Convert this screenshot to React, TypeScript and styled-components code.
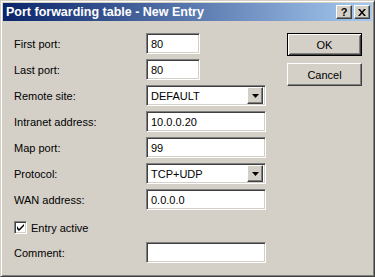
import React from "react";
import styled, { createGlobalStyle, css } from "styled-components";

const Global = createGlobalStyle`
  html, body { margin: 0; padding: 0; background: #d4d0c8; }
  * { box-sizing: border-box; }
`;

const font = `"Liberation Sans", Arial, sans-serif`;

const Window = styled.div`
  width: 375px;
  height: 277px;
  background: #d4d0c8;
  border: 1px solid;
  border-color: #d4d0c8 #404040 #404040 #d4d0c8;
  box-shadow: inset 1px 1px #ffffff, inset -1px -1px #808080;
  padding: 2px;
  display: flex;
  flex-direction: column;
  font-family: ${font};
  font-size: 11px;
  color: #000;
`;

const TitleBar = styled.div`
  height: 18px;
  background: linear-gradient(to right, #0a246a, #a6caf0);
  display: flex;
  align-items: center;
  padding: 0 2px 0 3px;
`;

const TitleText = styled.div`
  flex: 1;
  color: #fff;
  font-weight: bold;
  font-size: 12.5px;
`;

const raised = css`
  border: 1px solid;
  border-color: #ffffff #404040 #404040 #ffffff;
  box-shadow: inset -1px -1px #808080, inset 1px 1px #d4d0c8;
  background: #d4d0c8;
`;

const TitleButton = styled.div<{ $gap?: number }>`
  ${raised};
  width: 16px;
  height: 14px;
  margin-left: ${(p) => p.$gap ?? 0}px;
  display: flex;
  align-items: center;
  justify-content: center;
  font-weight: bold;
  font-size: 11px;
  line-height: 1;
  color: #000;
`;

const Body = styled.div`
  flex: 1;
  display: flex;
  padding: 12px 10px 0 11px;
`;

const Form = styled.div`
  display: flex;
  flex-direction: column;
  gap: 5px;
`;

const Row = styled.div<{ $top?: number }>`
  display: flex;
  align-items: center;
  margin-top: ${(p) => p.$top ?? 0}px;
`;

const Label = styled.div`
  width: 132px;
  white-space: nowrap;
`;

const sunken = css`
  border: 1px solid;
  border-color: #808080 #ffffff #ffffff #808080;
  box-shadow: inset 1px 1px #404040, inset -1px -1px #d4d0c8;
  background: #fff;
`;

const Field = styled.div<{ $w: number }>`
  ${sunken};
  width: ${(p) => p.$w}px;
  height: 21px;
  padding: 0 4px;
  display: flex;
  align-items: center;
  white-space: nowrap;
`;

const Select = styled(Field)`
  padding: 2px 2px 2px 4px;
  justify-content: space-between;
`;

const DropButton = styled.div`
  ${raised};
  width: 16px;
  height: 17px;
  display: flex;
  align-items: center;
  justify-content: center;
`;

const CheckRow = styled.div`
  display: flex;
  align-items: center;
  gap: 4px;
  margin-top: 6px;
  height: 13px;
`;

const CheckBox = styled.div`
  ${sunken};
  width: 13px;
  height: 13px;
  display: flex;
  align-items: center;
  justify-content: center;
`;

const Buttons = styled.div`
  margin-left: auto;
  display: flex;
  flex-direction: column;
  gap: 7px;
`;

const Button = styled.div<{ $default?: boolean }>`
  width: 75px;
  height: 23px;
  display: flex;
  align-items: center;
  justify-content: center;
  background: #d4d0c8;
  ${(p) =>
    p.$default
      ? css`
          border: 1px solid #000;
          box-shadow: inset 1px 1px #ffffff, inset -1px -1px #404040,
            inset 2px 2px #d4d0c8, inset -2px -2px #808080;
        `
      : raised};
`;

const Arrow = () => (
  <svg width="7" height="4" viewBox="0 0 7 4">
    <path d="M0 0h7L3.5 4z" fill="#000" />
  </svg>
);

const CloseGlyph = () => (
  <svg width="8" height="7" viewBox="0 0 8 7">
    <path d="M0 0h2l2 2.5L6 0h2L5 3.5 8 7H6L4 4.5 2 7H0l3-3.5z" fill="#000" />
  </svg>
);

const Check = () => (
  <svg width="7" height="7" viewBox="0 0 7 7">
    <path d="M0 2v3l2 2 5-5V0L2 5z" fill="#000" />
  </svg>
);

export default function App() {
  return (
    <>
      <Global />
      <Window>
        <TitleBar>
          <TitleText>Port forwarding table - New Entry</TitleText>
          <TitleButton>?</TitleButton>
          <TitleButton $gap={2}>
            <CloseGlyph />
          </TitleButton>
        </TitleBar>
        <Body>
          <Form>
            <Row>
              <Label>First port:</Label>
              <Field $w={54}>80</Field>
            </Row>
            <Row>
              <Label>Last port:</Label>
              <Field $w={54}>80</Field>
            </Row>
            <Row>
              <Label>Remote site:</Label>
              <Select $w={120}>
                DEFAULT
                <DropButton>
                  <Arrow />
                </DropButton>
              </Select>
            </Row>
            <Row>
              <Label>Intranet address:</Label>
              <Field $w={120}>10.0.0.20</Field>
            </Row>
            <Row>
              <Label>Map port:</Label>
              <Field $w={120}>99</Field>
            </Row>
            <Row>
              <Label>Protocol:</Label>
              <Select $w={120}>
                TCP+UDP
                <DropButton>
                  <Arrow />
                </DropButton>
              </Select>
            </Row>
            <Row>
              <Label>WAN address:</Label>
              <Field $w={120}>0.0.0.0</Field>
            </Row>
            <CheckRow>
              <CheckBox>
                <Check />
              </CheckBox>
              Entry active
            </CheckRow>
            <Row $top={3}>
              <Label>Comment:</Label>
              <Field $w={120} />
            </Row>
          </Form>
          <Buttons>
            <Button $default>OK</Button>
            <Button>Cancel</Button>
          </Buttons>
        </Body>
      </Window>
    </>
  );
}
